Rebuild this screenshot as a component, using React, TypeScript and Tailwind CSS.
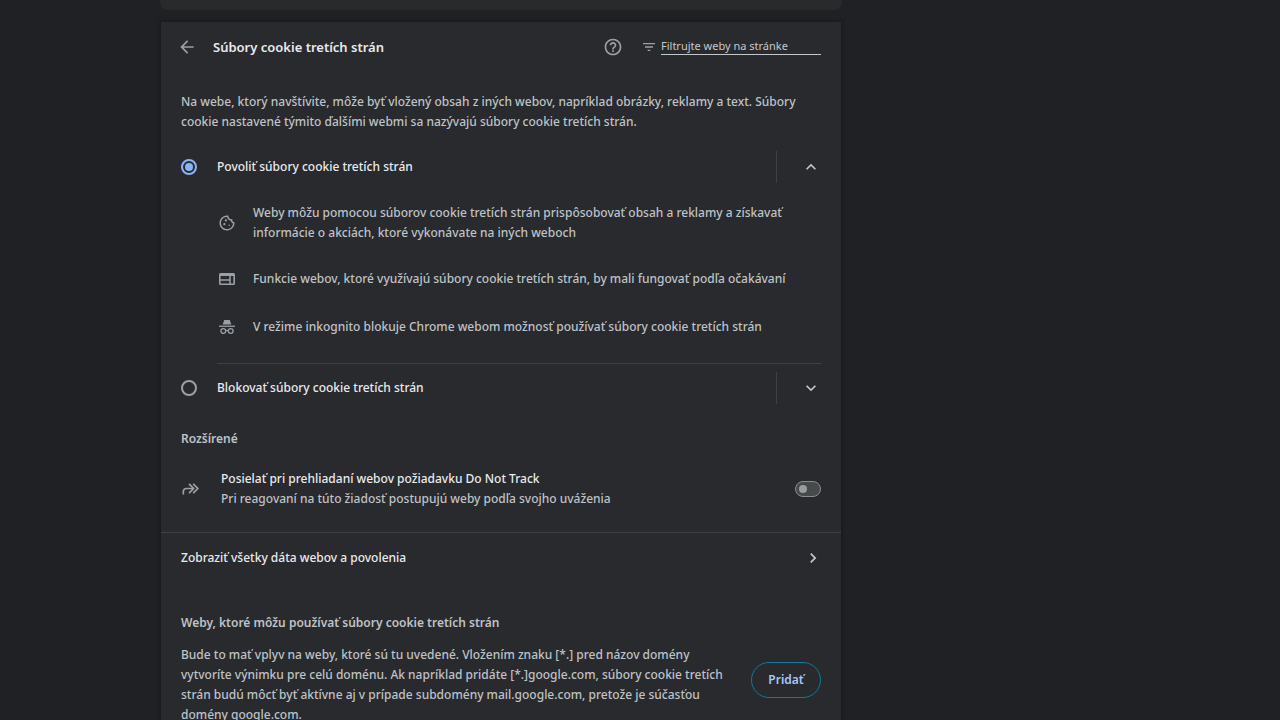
import { useState } from 'react'
import type { ReactNode } from 'react'
import {
	MdArrowBack,
	MdChevronRight,
	MdExpandLess,
	MdExpandMore,
	MdFilterList,
	MdHelpOutline,
	MdOutlineCookie,
} from 'react-icons/md'

function WebIcon() {
	return (
		<svg width="18" height="18" viewBox="0 0 18 18" fill="none" stroke="currentColor" aria-hidden="true">
			<rect x="1.8" y="3.8" width="14.4" height="10.4" rx="0.8" strokeWidth="1.6" />
			<path strokeWidth="2" d="M2 5h14" />
			<path strokeWidth="1.5" d="M2 10h9.5M12 6v8" />
		</svg>
	)
}

function IncognitoIcon() {
	return (
		<svg width="18" height="18" viewBox="0 0 18 18" fill="none" aria-hidden="true">
			<path fill="currentColor" d="M6.2 2h5.6l1.5 4.6H4.7L6.2 2Z" />
			<path fill="currentColor" d="M1 7.6h16v1.3H1z" />
			<circle cx="5.3" cy="13" r="2.4" stroke="currentColor" strokeWidth="1.3" />
			<circle cx="12.7" cy="13" r="2.4" stroke="currentColor" strokeWidth="1.3" />
			<path stroke="currentColor" strokeWidth="1.2" d="M7.7 12.8c.8-.5 1.8-.5 2.6 0" />
		</svg>
	)
}

function ForwardIcon() {
	return (
		<svg
			width="20"
			height="20"
			viewBox="0 0 20 20"
			fill="none"
			stroke="currentColor"
			strokeWidth="1.7"
			aria-hidden="true"
		>
			<path d="M2.3 15.4v-2.6c0-2 1.3-3.3 3.3-3.3h6.4" />
			<path d="m8 4.9 4.6 4.6L8 14.1" />
			<path d="m12.2 4.9 4.6 4.6-4.6 4.6" />
		</svg>
	)
}

function Detail({ icon, children }: { icon: ReactNode; children: ReactNode }) {
	return (
		<li className="flex min-h-12 items-center gap-4 py-3 pl-14">
			<span className="flex w-5 shrink-0 justify-center text-[#9aa0a6]">{icon}</span>
			<span>{children}</span>
		</li>
	)
}

interface OptionProps {
	id: string
	label: string
	checked: boolean
	open: boolean
	onSelect: () => void
	onToggle: () => void
}

function Option({ id, label, checked, open, onSelect, onToggle }: OptionProps) {
	return (
		<div className="flex h-12 items-center">
			<input
				type="radio"
				id={id}
				name="cookies"
				checked={checked}
				onChange={onSelect}
				className="size-4 shrink-0 appearance-none rounded-full border-2 border-[#9aa0a6] p-0.5 checked:border-[#8ab4f8] checked:bg-[#8ab4f8] checked:bg-clip-content"
			/>
			<label htmlFor={id} className="grow pl-5 text-[#e8eaed]">
				{label}
			</label>
			<div className="flex h-8 w-[45px] items-center justify-end border-l border-[#3f4042]">
				<button type="button" aria-label={label} aria-expanded={open} onClick={onToggle} className="text-[#c4c7cb]">
					{open ? <MdExpandLess size={20} /> : <MdExpandMore size={20} />}
				</button>
			</div>
		</div>
	)
}

export default function App() {
	const [mode, setMode] = useState('allow')
	const [allowOpen, setAllowOpen] = useState(true)
	const [blockOpen, setBlockOpen] = useState(false)

	return (
		<div className="h-screen overflow-x-hidden overflow-y-auto bg-[#202124] font-['Noto_Sans','Open_Sans',sans-serif] text-[12px] leading-5 font-medium text-[#bfc2c6] [scrollbar-width:none]">
			<div className="ml-40 max-w-[682px]">
				<div className="h-2.5 rounded-b-lg bg-[#292a2b]" />
				<main className="mx-px mt-3 bg-[#292a2d] pb-6 shadow-[0_0_3px_1px_#18191b]">
					<header className="flex h-[50px] items-center px-5">
						<button type="button" aria-label="Späť" className="-ml-1 text-[#9aa0a6]">
							<MdArrowBack size={20} />
						</button>
						<h1 className="grow pl-4 text-[13px] font-semibold text-[#e8eaed]">
							Súbory cookie tretích strán
						</h1>
						<button type="button" aria-label="Pomocník" className="mr-[18px] text-[#9aa0a6]">
							<MdHelpOutline size={20} />
						</button>
						<label htmlFor="filter" className="mr-1 text-[#9aa0a6]">
							<MdFilterList size={16} aria-label="Filter" />
						</label>
						<input
							id="filter"
							type="text"
							placeholder="Filtrujte weby na stránke"
							className="h-4 w-40 border-b border-[#c4c7cb] pb-0.5 text-[11px] font-normal outline-none placeholder:text-[#c4c7cb]"
						/>
					</header>

					<p className="px-5 pt-5">
						Na webe, ktorý navštívite, môže byť vložený obsah z iných webov, napríklad obrázky, reklamy a text. Súbory
						<br />
						cookie nastavené týmito ďalšími webmi sa nazývajú súbory cookie tretích strán.
					</p>

					<section className="px-5 pt-[11px]">
						<Option
							id="allow"
							label="Povoliť súbory cookie tretích strán"
							checked={mode === 'allow'}
							open={allowOpen}
							onSelect={() => setMode('allow')}
							onToggle={() => setAllowOpen(!allowOpen)}
						/>
						{allowOpen && (
							<ul className="-ml-5 pb-3">
								<Detail icon={<MdOutlineCookie size={18} />}>
									Weby môžu pomocou súborov cookie tretích strán prispôsobovať obsah a reklamy a získavať
									<br />
									informácie o akciách, ktoré vykonávate na iných weboch
								</Detail>
								<Detail icon={<WebIcon />}>
									Funkcie webov, ktoré využívajú súbory cookie tretích strán, by mali fungovať podľa očakávaní
								</Detail>
								<Detail icon={<IncognitoIcon />}>
									V režime inkognito blokuje Chrome webom možnosť používať súbory cookie tretích strán
								</Detail>
							</ul>
						)}
						<hr className="ml-9 border-[#3f4042]" />
						<Option
							id="block"
							label="Blokovať súbory cookie tretích strán"
							checked={mode === 'block'}
							open={blockOpen}
							onSelect={() => setMode('block')}
							onToggle={() => setBlockOpen(!blockOpen)}
						/>
					</section>

					<h2 className="px-5 pt-[17px] font-semibold">Rozšírené</h2>
					<div className="flex items-center px-5 pt-5 pb-[23px]">
						<span className="mr-5 text-[#9aa0a6]">
							<ForwardIcon />
						</span>
						<label htmlFor="dnt" className="grow">
							<span className="block text-[#e8eaed]">Posielať pri prehliadaní webov požiadavku Do Not Track</span>
							<span className="block">Pri reagovaní na túto žiadosť postupujú weby podľa svojho uváženia</span>
						</label>
						<input
							id="dnt"
							type="checkbox"
							role="switch"
							className="flex h-4 w-[26px] shrink-0 appearance-none items-center rounded-full border border-[#8a8d8d] bg-[#474a4a] px-[3px] before:size-2 before:rounded-full before:bg-[#9a9d9d] checked:justify-end"
						/>
					</div>

					<a
						href="#all-sites"
						className="flex h-[50px] items-center justify-between border-t border-[#3f4042] px-5 text-[#e8eaed]"
					>
						Zobraziť všetky dáta webov a povolenia
						<MdChevronRight size={20} className="-mr-0.5 text-[#c4c7cb]" />
					</a>

					<h2 className="px-5 pt-[31px] font-semibold">Weby, ktoré môžu používať súbory cookie tretích strán</h2>
					<div className="flex items-start justify-between px-5 pt-3">
						<p>
							Bude to mať vplyv na weby, ktoré sú tu uvedené. Vložením znaku [*.] pred názov domény
							<br />
							vytvoríte výnimku pre celú doménu. Ak napríklad pridáte [*.]google.com, súbory cookie tretích
							<br />
							strán budú môcť byť aktívne aj v prípade subdomény mail.google.com, pretože je súčasťou
							<br />
							domény google.com.
						</p>
						<button
							type="button"
							className="mt-[17px] h-9 w-[70px] shrink-0 rounded-full border border-[#0b7a9c] font-semibold text-[#a8c7fa]"
						>
							Pridať
						</button>
					</div>
				</main>
			</div>
		</div>
	)
}
